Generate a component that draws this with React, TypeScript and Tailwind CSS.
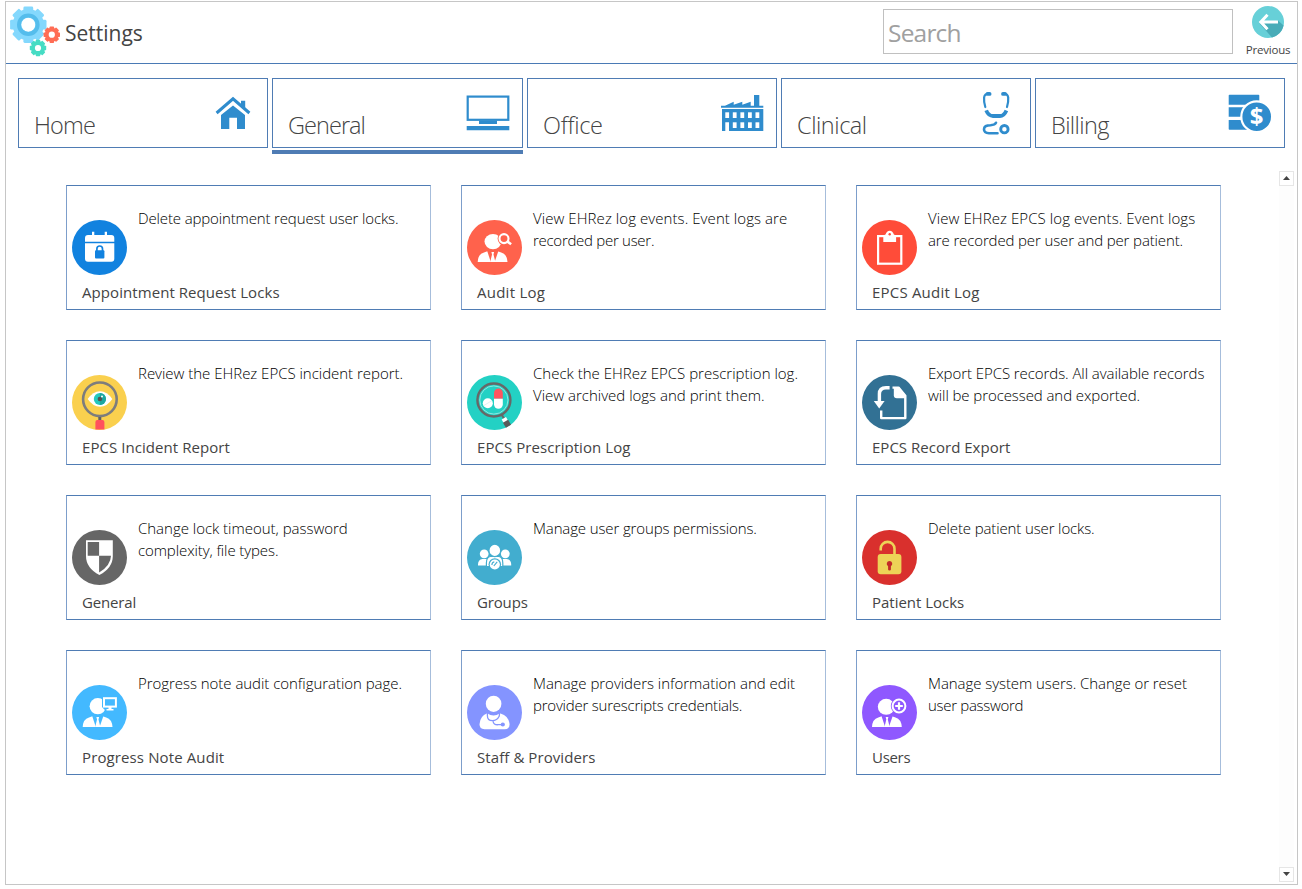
import React from "react";

const BLUE = "#2f8ccd";

function Gear({ cx, cy, r, color, hole }: { cx: number; cy: number; r: number; color: string; hole: number }) {
  return (
    <g transform={`translate(${cx} ${cy})`}>
      <circle r={r * 0.86} fill={color} />
      {[0, 45, 90, 135].map((a) => (
        <rect key={a} x={-r * 0.27} y={-r} width={r * 0.54} height={r * 2} rx={r * 0.08} fill={color} transform={`rotate(${a})`} />
      ))}
      <circle r={hole} fill="#fff" />
    </g>
  );
}

function SettingsLogo() {
  return (
    <svg className="h-[52px] w-[52px] shrink-0" viewBox="9 6 52 52">
      <Gear cx={28.3} cy={24.7} r={18.2} color="#84d8fd" hole={7} />
      <circle cx={28.3} cy={24.7} r={9.3} fill="none" stroke="#55bdec" strokeWidth={4} />
      <Gear cx={51.8} cy={34.7} r={8.2} color="#ff6d55" hole={3.1} />
      <Gear cx={38} cy={48} r={8.2} color="#46dcc4" hole={3.1} />
    </svg>
  );
}

function BackIcon() {
  return (
    <svg className="size-8" viewBox="0 0 32 32">
      <circle cx="16" cy="16" r="16" fill="#67d0d8" />
      <path d="M7.5 17.5 20 31.4A16 16 0 0 0 31.6 19.5L26 14.5 20 16Z" fill="#48acb8" />
      <path d="M15.5 8.8 8.8 16l6.7 7.2M9.5 16H26" fill="none" stroke="#fff" strokeWidth="3" />
    </svg>
  );
}

const homeIcon = (
  <g>
    <path d="M4.6 23 21 8.8 37.4 23" fill="none" stroke={BLUE} strokeWidth="3" strokeLinejoin="miter" />
    <path d="M29 10.7h4.2v9L29 16ZM9 25 21 15.4 33 25v14h-8V27.7h-7.7V39H9Z" fill={BLUE} />
  </g>
);

const monitorIcon = (
  <g>
    <rect x="1.7" y="6.6" width="40.6" height="23.2" fill="none" stroke={BLUE} strokeWidth="2.2" />
    <path d="M13 30.5h18V34H13ZM.7 36h42.6v4.3H.7Z" fill={BLUE} />
  </g>
);

const factoryIcon = (
  <g fill={BLUE}>
    <path d="M0 15.7h4l8.7-4v3l8.6-3v3l8.4-3v4H33V5h5.3v10.7H42.3v2H0Z" />
    <path d="M1 19h41.3v22H8V32.3H4.3V41H1Z" />
    <g fill="#fff">
      {[4.3, 11.8, 19.4, 27, 34.5].map((x, i) => (
        <g key={x}>
          <rect x={x} y="22.3" width="3.8" height="5.7" />
          {i > 0 && <rect x={x} y="32.3" width="3.8" height="5.7" />}
        </g>
      ))}
    </g>
  </g>
);

const stethoscopeIcon = (
  <g fill="none" stroke={BLUE} strokeLinecap="round">
    <path d="M14 3.7Q9.7 3.5 9.1 7.5 8.7 12 10.3 17M28.5 3.7Q32.6 3.5 33.2 7.5 33.6 12 32 17" strokeWidth="2.2" />
    <path d="M12.6 3.9h2M28 3.9h2" strokeWidth="3.8" />
    <path d="M11.2 20.4Q13.5 26 18 26H25Q29 26 31.4 20.4" strokeWidth="3.8" strokeLinecap="butt" />
    <path d="M21 32.8Q20 35 15.5 35.2 9 35.2 9 39.2 9 43 14 43.2H22.5" strokeWidth="2.6" />
    <circle cx="29.4" cy="39.2" r="3.7" strokeWidth="2.9" />
  </g>
);

const billingIcon = (
  <g>
    <path d="M-.3 5.5q0-.8.8-.8h29q.8 0 .8.8v9.2H-.3ZM-.3 17.3H24v9.4H-.3ZM-.3 30H24v9.7H.5q-.8 0-.8-.8Z" fill={BLUE} />
    <circle cx="27.7" cy="26.7" r="15.4" fill={BLUE} stroke="#fff" strokeWidth="2.2" />
    <text x="27.7" y="35.2" textAnchor="middle" fill="#fff" className="font-['Open_Sans',sans-serif] text-[24px] font-bold">$</text>
  </g>
);

const tabs = [
  { label: "Home", icon: homeIcon, tracking: "tracking-[-0.8px]" },
  { label: "General", icon: monitorIcon, active: true, tracking: "tracking-[-0.95px]" },
  { label: "Office", icon: factoryIcon, tracking: "tracking-[-0.3px]" },
  { label: "Clinical", icon: stethoscopeIcon, tracking: "tracking-[-0.45px]" },
  { label: "Billing", icon: billingIcon, tracking: "tracking-[-0.6px]" },
];

function Suit({ color }: { color: string }) {
  return (
    <g>
      <path d="M10.7 42Q11 34 17 32.4L21 31h9l4.2 1.4Q40 34 40.5 42Z" fill="#fff" />
      <path d="M20.2 31h11.2L27.6 42h-3.8Z" fill={color} />
      <path d="M24.4 32h2.7l-.6 2.4L28.4 42h-5.2l1.8-7.6Z" fill="#fff" />
    </g>
  );
}

const icons: Record<string, React.ReactNode> = {
  calendarLock: (
    <g>
      <circle cx="27.5" cy="27.5" r="27.5" fill="#1182df" />
      <path d="M13 21.7V18q0-3 3-3h4v-3.3h2.3V15h10.4v-3.3H35V15h4.3q3 0 3 3v3.7ZM13 23.2h29.3v15.5q0 3-3 3H16q-3 0-3-3Z" fill="#fff" />
      <rect x="23" y="30.3" width="9.4" height="8.2" rx="1" fill="#1182df" />
      <path d="M24.9 31v-2.2a2.8 2.8 0 0 1 5.6 0V31" fill="none" stroke="#1182df" strokeWidth="1.7" />
    </g>
  ),
  auditLog: (
    <g>
      <circle cx="27.5" cy="27.5" r="27.5" fill="#ff624c" />
      <ellipse cx="26" cy="21.6" rx="8.5" ry="7.6" fill="#fff" />
      <circle cx="37" cy="18.6" r="6.4" fill="#ff624c" />
      <circle cx="37" cy="18.6" r="4.5" fill="none" stroke="#fff" strokeWidth="2.1" />
      <path d="m40.5 21.6 3.6 2.6" stroke="#fff" strokeWidth="2.6" />
      <Suit color="#ff624c" />
    </g>
  ),
  clipboard: (
    <g>
      <circle cx="27.5" cy="27.5" r="27.5" fill="#ff4c39" />
      <rect x="16.1" y="16.1" width="23.2" height="27.6" fill="none" stroke="#fff" strokeWidth="2.2" />
      <path d="M21.3 22v-5.3q0-2 2.2-2.2 1.2-3.8 4.2-3.8t4.2 3.8q2.2.2 2.2 2.2V22Z" fill="#fff" />
      <circle cx="27.7" cy="14.3" r="1.2" fill="#ff4c39" />
    </g>
  ),
  eye: (
    <g>
      <circle cx="27.5" cy="27.5" r="27.5" fill="#fad04e" />
      <circle cx="27.9" cy="24.3" r="16.8" fill="none" stroke="#7d7d7d" strokeWidth="2.6" />
      <path d="M15.7 24Q21 16.2 28 16.2T40.3 24Q35 31.8 28 31.8T15.7 24Z" fill="#fff" />
      <circle cx="27.9" cy="24" r="6.1" fill="#24c8bd" />
      <path d="M27.9 17.9v12.2a6.1 6.1 0 0 0 0-12.2" fill="#1ea69f" />
      <circle cx="27.9" cy="24" r="2.3" fill="#4f5355" />
      <circle cx="30" cy="21.5" r="1" fill="#fff" />
      <path d="M26.3 42h3v4h-3Z" fill="#5f6061" />
      <path d="M23.4 54.6V47q0-2 2-2h5q2 0 2 2v7.6Z" fill="#ff525d" />
    </g>
  ),
  pills: (
    <g>
      <circle cx="27.5" cy="27.5" r="27.5" fill="#23d1c4" />
      <circle cx="26.9" cy="25" r="16.5" fill="none" stroke="#676767" strokeWidth="2.4" />
      <circle cx="26.9" cy="25" r="14.1" fill="none" stroke="#8ce8e1" strokeWidth="1" />
      <circle cx="20.8" cy="28.2" r="5" fill="#fff" />
      <path d="m16.5 30.7 8.4-5" stroke="#d4f3f0" strokeWidth=".8" />
      <path d="M27 23.7v-5.8a4.4 4.4 0 0 1 8.8 0v5.8Z" fill="#ff5560" />
      <path d="M27 23.7h8.8v5.6a4.4 4.4 0 0 1-8.8 0Z" fill="#fff" />
      <path d="m34.6 39.6 2.5 4" stroke="#676767" strokeWidth="2" />
      <path d="m36.8 43.2 2.2 3.8" stroke="#fff" strokeWidth="5" />
      <path d="m38.5 46.2 3 5" stroke="#5a5a5a" strokeWidth="6" />
    </g>
  ),
  exportFile: (
    <g>
      <circle cx="27.5" cy="27.5" r="27.5" fill="#327194" />
      <path d="M30.5 12.6h6l6.8 8.2v22.3H19.2V35.5" fill="none" stroke="#fff" strokeWidth="2.4" strokeLinejoin="round" />
      <path d="M31.8 12h5l7 8.8v2.5h-9q-3 0-3-3Z" fill="#fff" />
      <path d="M27.6 12.7H24q-6.6 0-6.6 6.3v8" fill="none" stroke="#fff" strokeWidth="3.4" />
      <path d="M11.8 26h10.8l-5.4 7.4Z" fill="#fff" />
    </g>
  ),
  shield: (
    <g>
      <circle cx="27.5" cy="27.5" r="27.5" fill="#666" />
      <path d="M14 10.3h26.8V26q0 12-13.4 19Q14 38 14 26Z" fill="#fff" />
      <path d="M15.7 12h11.4v13.7H15.7ZM27.1 25.7H39q-.2 9.6-11.9 16.9Z" fill="#666" />
    </g>
  ),
  groups: (
    <g>
      <circle cx="27.5" cy="27.5" r="27.5" fill="#42adcf" />
      <g fill="#fff">
        <circle cx="17.2" cy="23.8" r="4.4" />
        <circle cx="38.3" cy="23.8" r="4.4" />
        <path d="M11 35.5q-.4-6 4.5-6.6h5.2v6.6ZM44.2 35.5q.4-6-4.5-6.6h-5.2v6.6Z" />
      </g>
      <path d="M19.4 36v-3q0-6 4-6.5h8.4q4 .5 4 6.5v3" fill="#fff" stroke="#42adcf" strokeWidth="1.2" />
      <ellipse cx="27.8" cy="20.4" rx="5.9" ry="6.2" fill="#fff" stroke="#42adcf" strokeWidth="1.2" />
      <circle cx="27.8" cy="34.5" r="6.3" fill="#42adcf" />
      <circle cx="27.8" cy="34.5" r="5.1" fill="#fff" />
      <path d="m26.8 36 3.4-4.2M24.9 34.9a3.2 3.2 0 0 1 2.4-3.2" fill="none" stroke="#42adcf" strokeWidth="1.1" />
    </g>
  ),
  padlock: (
    <g>
      <circle cx="27.5" cy="27.5" r="27.5" fill="#d9302d" />
      <path d="M18.7 20.5v-1.7a6.8 6.8 0 0 1 13.8 0V25" fill="none" stroke="#edd357" strokeWidth="2.6" />
      <rect x="15.7" y="24" width="23.7" height="20.3" rx="3" fill="#edd357" />
      <path d="M27.5 31a2.8 2.8 0 0 0-1.4 5.2v3.3q0 1 1.4 1t1.4-1v-3.3A2.8 2.8 0 0 0 27.5 31Z" fill="#c22a28" />
    </g>
  ),
  progress: (
    <g>
      <circle cx="27.5" cy="27.5" r="27.5" fill="#43b9ff" />
      <ellipse cx="25.8" cy="21.2" rx="8.2" ry="8.1" fill="#fff" />
      <path d="M30 11h16.2v13.7H32.5L30 22Z" fill="#43b9ff" />
      <rect x="32" y="13.2" width="11.9" height="8.4" fill="none" stroke="#fff" strokeWidth="2" />
      <path d="M36.5 22h3v2h2v1.4h-7V24h2Z" fill="#fff" />
      <Suit color="#43b9ff" />
    </g>
  ),
  doctor: (
    <g>
      <circle cx="27.5" cy="27.5" r="27.5" fill="#8494ff" />
      <ellipse cx="26.6" cy="18.8" rx="7.8" ry="8.1" fill="#fff" />
      <path d="M20.2 28.3q6.3 4.6 12.7 0 9.4 2.8 9.7 11 0 5-5 5H17.5q-5-.2-5-5 .4-8.2 7.7-11Z" fill="#fff" />
      <path d="M20.4 28v2.7q0 5 5 5 4.6 0 6.8-4.4l.4-3.3M26 35.7q.3 4.4 5.2 4h3.2" fill="none" stroke="#8494ff" strokeWidth="1.3" />
      <circle cx="35.8" cy="39.5" r="2.1" fill="#8494ff" />
    </g>
  ),
  userPlus: (
    <g>
      <circle cx="27.5" cy="27.5" r="27.5" fill="#8f58ff" />
      <ellipse cx="24.2" cy="21.8" rx="8.4" ry="8" fill="#fff" />
      <circle cx="37" cy="21" r="8.2" fill="#8f58ff" />
      <circle cx="37" cy="21" r="6.4" fill="none" stroke="#fff" strokeWidth="2" />
      <path d="M37 17.2v7.6M33.2 21h7.6" stroke="#fff" strokeWidth="2.2" />
      <g transform="translate(-.7 0)">
        <Suit color="#8f58ff" />
      </g>
    </g>
  ),
};

type Line = [text: string, tracking: string];

const cards: { title: string; titleTracking: string; lines: Line[]; icon: string }[] = [
  { title: "Appointment Request Locks", titleTracking: "tracking-[0.07px]", lines: [["Delete appointment request user locks.", "tracking-[-0.14px]"]], icon: "calendarLock" },
  { title: "Audit Log", titleTracking: "tracking-[0.25px]", lines: [["View EHRez log events. Event logs are", "tracking-[0.07px]"], ["recorded per user.", "tracking-[-0.28px]"]], icon: "auditLog" },
  { title: "EPCS Audit Log", titleTracking: "tracking-[0.2px]", lines: [["View EHRez EPCS log events. Event logs", "tracking-[0.08px]"], ["are recorded per user and per patient.", "tracking-[-0.13px]"]], icon: "clipboard" },
  { title: "EPCS Incident Report", titleTracking: "tracking-[0.06px]", lines: [["Review the EHRez EPCS incident report.", "tracking-[-0.02px]"]], icon: "eye" },
  { title: "EPCS Prescription Log", titleTracking: "tracking-[0.06px]", lines: [["Check the EHRez EPCS prescription log.", "tracking-normal"], ["View archived logs and print them.", "tracking-normal"]], icon: "pills" },
  { title: "EPCS Record Export", titleTracking: "tracking-[0.02px]", lines: [["Export EPCS records. All available records", "tracking-[-0.07px]"], ["will be processed and exported.", "tracking-[-0.08px]"]], icon: "exportFile" },
  { title: "General", titleTracking: "tracking-[-0.15px]", lines: [["Change lock timeout, password", "tracking-[-0.02px]"], ["complexity, file types.", "tracking-[-0.1px]"]], icon: "shield" },
  { title: "Groups", titleTracking: "tracking-[-0.15px]", lines: [["Manage user groups permissions.", "tracking-[-0.13px]"]], icon: "groups" },
  { title: "Patient Locks", titleTracking: "tracking-[-0.02px]", lines: [["Delete patient user locks.", "tracking-[-0.13px]"]], icon: "padlock" },
  { title: "Progress Note Audit", titleTracking: "tracking-[0.12px]", lines: [["Progress note audit configuration page.", "tracking-[-0.04px]"]], icon: "progress" },
  { title: "Staff & Providers", titleTracking: "tracking-[0.08px]", lines: [["Manage providers information and edit", "tracking-[-0.03px]"], ["provider surescripts credentials.", "tracking-[-0.22px]"]], icon: "doctor" },
  { title: "Users", titleTracking: "tracking-[-0.3px]", lines: [["Manage system users. Change or reset", "tracking-[-0.06px]"], ["user password", "tracking-[-0.3px]"]], icon: "userPlus" },
];

function ScrollButton({ down }: { down?: boolean }) {
  return (
    <div className="flex size-[15px] items-center justify-center border border-[#e6e6e6] bg-white pb-px">
      <svg className="h-1 w-[7px]" viewBox="0 0 7 4">
        <path d={down ? "M0 0h7L3.5 4Z" : "M0 4h7L3.5 0Z"} fill="#444" />
      </svg>
    </div>
  );
}

export default function App() {
  return (
    <div className="h-[889px] w-[1302px] overflow-hidden bg-white pt-px pl-[5px] font-['Open_Sans','Noto_Sans',sans-serif] text-[#444]">
      <div className="flex h-[884px] w-[1293px] flex-col border border-[#c6c6c6]">
        <header className="flex h-[62px] shrink-0 border-b border-[#4a7ab5] pr-px pl-[3px]">
          <div className="flex grow items-start pt-1">
            <SettingsLogo />
            <div className="ml-1 pt-3 text-[21px] leading-[30px]">Settings</div>
          </div>
          <div className="mt-[7px] flex h-[45px] w-[350px] items-center border border-[#c0c0c0] pt-[3px] pl-1 text-[24.5px] tracking-[-0.8px] text-[#a0a0a0]">
            Search
          </div>
          <div className="ml-[7px] flex w-[56px] flex-col items-center pt-1">
            <BackIcon />
            <div className="mt-1 text-[11.5px] leading-4 tracking-[-0.2px]">Previous</div>
          </div>
        </header>

        <nav className="mt-[14px] ml-3 grid shrink-0 grid-cols-[250px_251px_250px_250px_250px] gap-1">
          {tabs.map((t) => (
            <div key={t.label}>
              <div className="flex h-[70px] justify-between border border-[#4f7cb4] pr-[11px] pl-[15px]">
                <div className={`pt-[30px] text-[23.5px] leading-8 font-light ${t.tracking}`}>{t.label}</div>
                <svg className={t.active ? "mt-[11px] mr-px size-11 shrink-0 overflow-visible" : "mt-[11px] size-11 shrink-0 overflow-visible"} viewBox="0 0 44 44">
                  {t.icon}
                </svg>
              </div>
              <div className={t.active ? "mt-0.5 h-1 bg-[#4f7cb4]" : "mt-0.5 h-1"} />
            </div>
          ))}
        </nav>

        <div className="mt-[17px] flex min-h-0 grow justify-between pr-[3px] pb-0.5 pl-[60px]">
          <main className="grid auto-rows-[125px] grid-cols-[365px_365px_365px] gap-x-[30px] gap-y-[30px] pt-[14px]">
            {cards.map((c) => (
              <section key={c.title} className="flex flex-col border border-t-[#4f7cb4] border-r-[#a6bddb] border-b-[#4f7cb4] border-l-[#7d9ecb]">
                <div className="flex h-[89px] shrink-0 pl-[5px]">
                  <svg className="mt-[34px] size-[55px] shrink-0" viewBox="0 0 55 55">
                    {icons[c.icon]}
                  </svg>
                  <div className="ml-[11px] pt-[21px] text-[15px] leading-[22px] font-light text-black">
                    {c.lines.map(([text, tracking]) => (
                      <p key={text} className={`whitespace-nowrap ${tracking}`}>{text}</p>
                    ))}
                  </div>
                </div>
                <h2 className={`pt-[6px] pl-[15px] text-[15px] leading-[22px] ${c.titleTracking}`}>{c.title}</h2>
              </section>
            ))}
          </main>
          <div className="flex flex-col justify-between bg-[#fdfdfd]">
            <ScrollButton />
            <ScrollButton down />
          </div>
        </div>
      </div>
    </div>
  );
}
